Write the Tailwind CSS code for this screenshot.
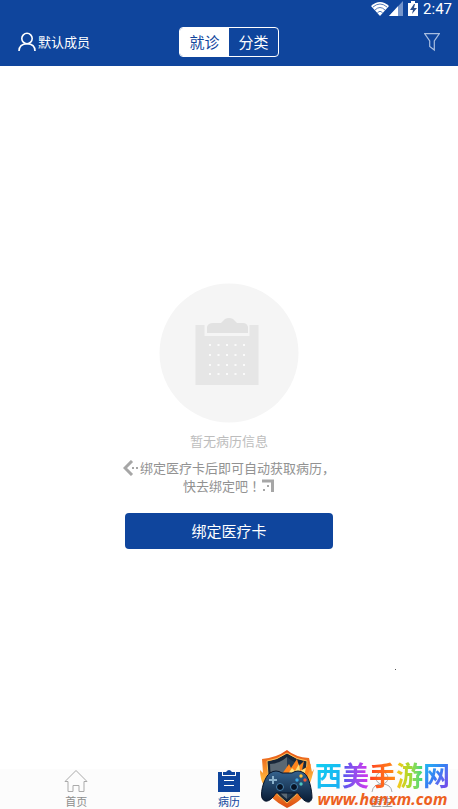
<!DOCTYPE html>
<html lang="zh-CN">
<head>
<meta charset="utf-8">
<meta name="viewport" content="width=device-width, initial-scale=1">
<title>病历</title>
<script src="https://cdn.jsdelivr.net/npm/@tailwindcss/browser@4"></script>
</head>
<body class="relative flex min-h-screen flex-col overflow-x-hidden bg-white font-['Noto_Sans_CJK_SC',sans-serif]">
<header class="bg-[#0f459d] text-white">
  <div class="flex h-[18px] items-center justify-end gap-1 pr-1.5 font-[Roboto,sans-serif] text-[15px] leading-[18px]">
    <div class="flex items-center">
      <svg class="h-4 w-[18px]" viewBox="0 0 18 16"><path d="M9 15 0 5Q9-3 18 5Z" fill="#fff"/><path d="M2 6Q9 0 16 6M4 9Q9 4 14 9M6.500 11.500Q9 9 11.500 11.500" fill="none" stroke="#0f459d" stroke-width=".7"/></svg>
      <svg class="h-4 w-[14px]" viewBox="0 0 14 16"><path d="M14 0V15H0Z" fill="#7595cb"/><path d="M9 5.300V15H0Z" fill="#fff"/></svg>
    </div>
    <svg class="h-4 w-3" viewBox="0 0 12 16"><path d="M1 2h3V0h4v2h3v13H1Z" fill="#fff"/><path d="m7 3-4 6h3l-1 4 5-6H7l1-4Z" fill="#294d8b"/></svg>
    <time>2:47</time>
  </div>
  <div class="grid h-12 grid-cols-3 items-center px-4">
    <button class="flex items-center gap-0.5 justify-self-start text-[13px] leading-5">
      <svg class="h-5 w-5" viewBox="0 0 20 20" fill="none" stroke="#fff" stroke-width="1.600"><circle cx="11" cy="6.500" r="5.200"/><path d="M3 19c0-4.500 3-7.300 8-7.300s8 2.800 8 7.300"/></svg>默认成员
    </button>
    <div class="flex h-[30px] w-[100px] justify-self-center overflow-hidden rounded border border-white text-[15px]">
      <button class="flex-1 bg-white text-[#0f459d]">就诊</button><button class="flex-1">分类</button>
    </div>
    <button class="mr-0.5 justify-self-end" aria-label="筛选"><svg class="h-5 w-4" viewBox="0 0 16 20" fill="none" stroke="#a9bee0" stroke-width="1.200"><path d="M.6 1.600H15.400L10.300 9V18L5.700 14.500V9Z"/></svg></button>
  </div>
</header>
<main class="flex flex-1 flex-col items-center pt-[217px]">
  <svg class="h-[140px] w-[140px]" viewBox="0 0 140 140">
    <circle cx="70" cy="70" r="69.500" fill="#f5f5f5"/>
    <path d="M36.500 42h9v11h45v-11h9v60h-63Z" fill="#e6e6e6"/>
    <path d="M48 50v-6q1-4 6-4h8l4-4q4-2 8 0l4 4h6q4 0 5 4v6Z" fill="#e2e2e2"/>
    <path d="M50 62H89M50 72H89M50 82H89M50 91H89" stroke="#fafafa" stroke-width="2" stroke-dasharray="2 6.500"/>
  </svg>
  <p class="mt-2 text-[13px] leading-5 text-[#bdbdbd]">暂无病历信息</p>
  <div class="mt-2 flex flex-col items-center text-[13px] leading-[18px] text-[#929292]">
    <p class="flex items-center"><svg class="h-4 w-[17px]" viewBox="0 0 17 16" fill="none" stroke="#a6a6a6"><path d="m9 1-7 7 7 7" stroke-width="3"/><path d="M9 8h2M13 8h2" stroke-width="2"/></svg>绑定医疗卡后即可自动获取病历，</p>
    <p class="flex items-center">快去绑定吧<span class="font-['Noto_Sans_CJK_TC',sans-serif]" lang="zh-TW">！</span><svg class="h-4 w-[14px]" viewBox="0 0 14 16" fill="none" stroke="#a6a6a6"><path d="M1 3h10.500v11" stroke-width="3"/><path d="M6 8h2M2 12h2" stroke-width="2"/></svg></p>
  </div>
  <button class="mt-[18px] h-9 w-[208px] rounded bg-[#0f459d] text-[15px] text-white">绑定医疗卡</button>
  <span class="mt-[120px] mr-[62px] h-px w-px self-end bg-[#555]"></span>
</main>
<nav class="grid h-10 grid-cols-3 items-start bg-[#fcfcfc] text-[11px] leading-4 text-[#8d8d8d]">
  <a href="#" class="flex flex-col items-center"><svg class="h-6 w-6" viewBox="0 0 24 24" fill="none" stroke="#aaa"><path d="M1 12.500 12 1.500l11 11h-3v10h-5v-6H9v6H4v-10Z"/></svg>首页</a>
  <a href="#" class="flex flex-col items-center text-[#0f459d]"><svg class="h-6 w-6" viewBox="0 0 24 24"><path d="M1 3h4v4h14V3h4v20H1Z" fill="#0f459d"/><path d="M6 6V3h3q3-4 6 0h3v3Z" fill="#0f459d"/><path d="M7 11.500h10M7 16.500h10" stroke="#fff"/></svg>病历</a>
  <a href="#" class="flex flex-col items-center"><svg class="h-6 w-6" viewBox="0 0 24 24" fill="none" stroke="#aaa"><circle cx="12" cy="9" r="6"/><path d="M2 23q1-8 10-8t10 8"/></svg>医生</a>
</nav>
<aside class="absolute right-2 bottom-0 flex items-start">
  <svg class="h-[60px] w-14" viewBox="0 0 56 60">
    <defs><linearGradient id="fire" x2="0" y2="1"><stop stop-color="#e54f13"/><stop offset=".5" stop-color="#ffb33a"/><stop offset="1" stop-color="#dc4a12"/></linearGradient><linearGradient id="pad" x2="0" y2="1"><stop stop-color="#36648f"/><stop offset="1" stop-color="#081b34"/></linearGradient></defs>
    <path d="M28 1Q36 8 50 9l3 14 2-3q-2 9-5 17-3 13-22 22Q10 50 5 37 1 30 1 21l3 3-1-14Q17 9 28 1Z" fill="url(#fire)"/>
    <path d="M28 4Q38 11 48 12Q49 39 28 54Q7 39 8 12Q18 11 28 4Z" fill="#182739" stroke="#ffc35a"/>
    <path d="M28 8v42Q11 38 11 15Q20 15 28 8Z" fill="#5a6873"/><path d="M28 8v42Q45 38 45 15 36 15 28 8Z" fill="#253b51"/>
    <path d="M23 25 30 15 32 19 38 10 40 17 45 12 43 21 52 15 48 29Z" fill="#ff851c"/><path d="m29 25 4-6 3 3 4-7 1 7 6-3-2 8Z" fill="#ffe078"/>
    <path d="M11 24q6-4 12 0h10q6-4 12 0c5 3 8 17 8 25-2 8-9 3-14-5H17C12 52 6 55 3 49 1 42 6 27 11 24Z" fill="url(#pad)" stroke="#06142a"/>
    <path d="M14 27v8M10 31h8" stroke="#8bb2cc" stroke-width="2"/><circle cx="21" cy="38" r="3.500" fill="#071324" stroke="#4784b1"/><circle cx="35" cy="38" r="3.500" fill="#071324" stroke="#4784b1"/><circle cx="42" cy="27" r="1.700" fill="#ffc53b"/><circle cx="38" cy="31" r="1.700" fill="#3aa9e5"/><circle cx="46" cy="31" r="1.700" fill="#f05b35"/><circle cx="42" cy="35" r="1.700" fill="#4fc7c0"/>
  </svg>
  <div class="flex flex-col items-center pt-2.5">
    <strong class="flex text-[27px] leading-8 font-bold text-transparent"><span class="bg-linear-to-br from-[#12d4f0] to-[#1ca9f2] bg-clip-text">西</span><span class="bg-linear-to-r from-[#4b55ee] to-[#d52cec] bg-clip-text">美</span><span class="bg-linear-to-r from-[#ff3b22] to-[#ff8a12] bg-clip-text">手</span><span class="bg-linear-to-r from-[#ffc414] via-[#a6d92b] to-[#21d982] bg-clip-text">游</span><span class="bg-linear-to-br from-[#10c5f4] via-[#377df2] to-[#7c32e8] bg-clip-text">网</span></strong>
    <span class="font-['Noto_Sans',sans-serif] text-base leading-4 font-bold text-[#ed611f] italic">www.hanxm.com</span>
  </div>
</aside>
</body>
</html>
